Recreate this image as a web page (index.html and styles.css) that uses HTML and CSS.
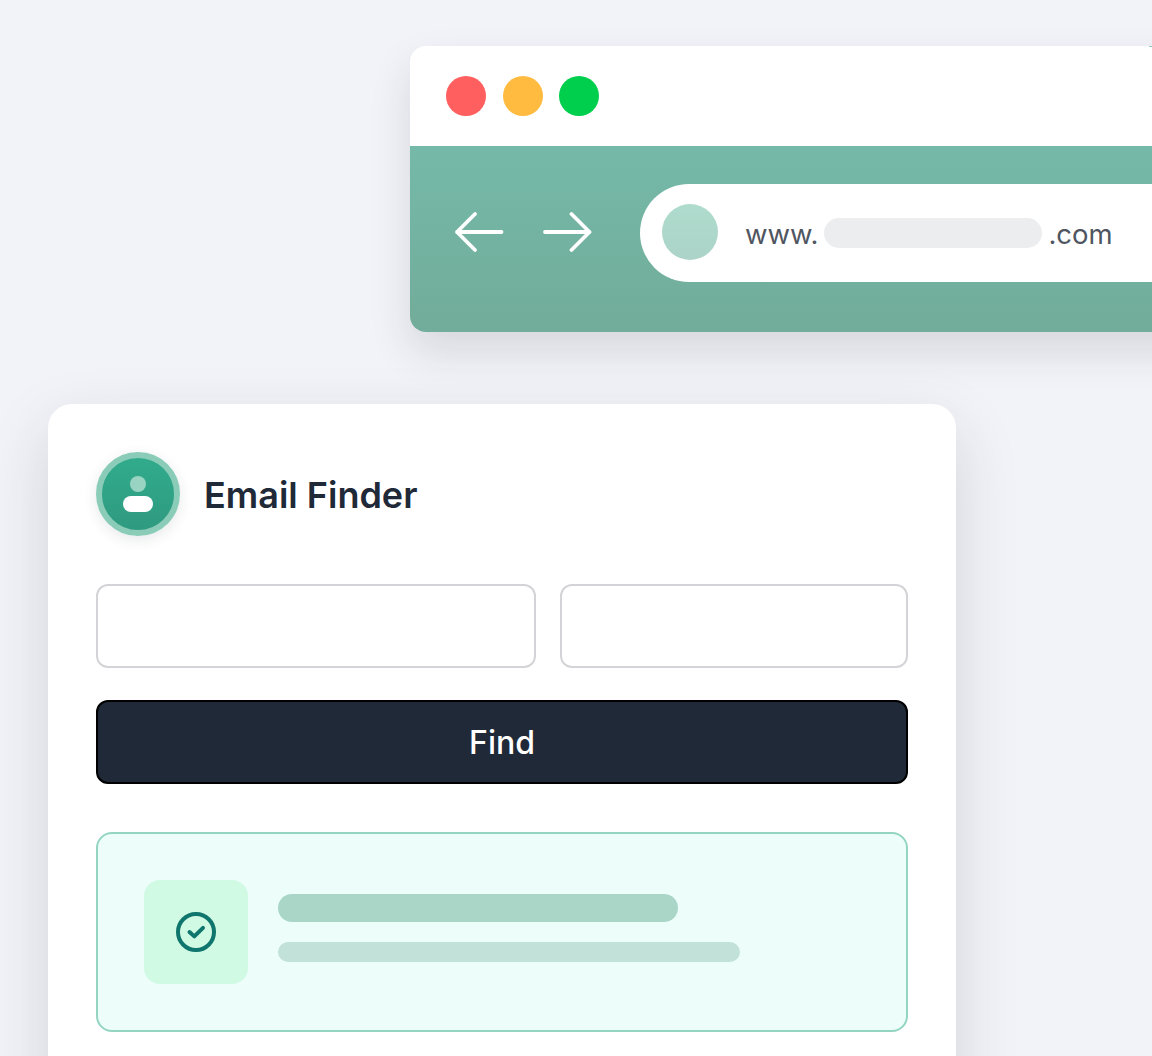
FILE: index.html
```html
<!DOCTYPE html>
<html lang="en">
<head>
<meta charset="utf-8">
<title>Email Finder</title>
<link rel="stylesheet" href="styles.css">
</head>
<body>
<main class="stage">
  <section class="browser">
    <div class="titlebar">
      <span class="dot dot-red"></span>
      <span class="dot dot-yellow"></span>
      <span class="dot dot-green"></span>
    </div>
    <div class="toolbar">
      <div class="nav">
        <svg class="arrow" width="50" height="42" viewBox="0 0 50 42" fill="none"><path d="M47.5 21H3M21 3 3 21l18 18"/></svg>
        <svg class="arrow" width="50" height="42" viewBox="0 0 50 42" fill="none"><path d="M3 21h44.5M29.5 3l18 18-18 18"/></svg>
      </div>
      <div class="address">
        <span class="favicon"></span>
        <span class="url">www.</span>
        <span class="blank"></span>
        <span class="url">.com</span>
      </div>
    </div>
  </section>
  <section class="card">
    <header class="card-head">
      <div class="avatar">
        <span class="avatar-head"></span>
        <span class="avatar-body"></span>
      </div>
      <h1 class="title">Email Finder</h1>
    </header>
    <div class="fields">
      <div class="field field-wide"></div>
      <div class="field field-narrow"></div>
    </div>
    <button class="find" type="button">Find</button>
    <div class="result">
      <div class="check-box">
        <svg width="40" height="40" viewBox="0 0 40 40" fill="none"><circle class="check-ring" cx="20" cy="20" r="18"/><path class="check-mark" d="M13.5 20l4.8 4.4 8.7-8.6"/></svg>
      </div>
      <div class="lines">
        <span class="line line-a"></span>
        <span class="line line-b"></span>
      </div>
    </div>
  </section>
</main>
</body>
</html>
```
FILE: styles.css
```css
* { box-sizing: border-box; }
html, body { margin: 0; height: 1056px; overflow: hidden; }
body { background: #f2f3f8; font-family: Inter, "Liberation Sans", sans-serif; }
.stage { display: flex; flex-direction: column; align-items: flex-start; padding: 46px 0 0 48px; }

.browser {
  position: relative;
  flex: none;
  width: 900px;
  margin-left: 362px;
  border-radius: 16px;
  overflow: hidden;
  box-shadow: 0 20px 40px rgba(31, 41, 55, 0.13);
}
.browser::after {
  content: "";
  position: absolute;
  top: 0;
  left: 739px;
  width: 3px;
  height: 1px;
  background: #8fc9bb;
}
.titlebar { display: flex; align-items: center; gap: 16.5px; height: 100px; padding-left: 36px; background: #fff; }
.dot { width: 40px; height: 40px; border-radius: 50%; }
.dot-red { background: #ff5f5f; }
.dot-yellow { background: #ffbb40; }
.dot-green { background: #00ce4d; }
.toolbar {
  display: flex;
  align-items: flex-start;
  height: 186px;
  padding: 38px 0 0 44px;
  background: linear-gradient(180deg, #75b9a8, #72ac9a);
}
.nav { display: flex; gap: 38px; width: 186px; margin-top: 27px; }
.arrow { flex: none; }
.arrow path { stroke: #fff; stroke-width: 3.8; stroke-linecap: round; stroke-linejoin: round; }
.address {
  display: flex;
  align-items: center;
  flex: 1;
  height: 98px;
  padding-left: 22px;
  border-radius: 49px 0 0 49px;
  background: #fff;
}
.favicon { width: 56px; height: 56px; margin: 0 27px 2px 0; border-radius: 50%; background: linear-gradient(180deg, #aedccd, #acd3c8); }
.url { margin-top: 2px; font-size: 27.5px; line-height: 34px; color: #4f5661; }
.blank { width: 218px; height: 30px; margin: 0 6px; border-radius: 15px; background: #ecedef; }

.card {
  flex: none;
  width: 908px;
  height: 760px;
  margin-top: 72px;
  padding: 48px;
  border-radius: 24px;
  background: #fff;
  box-shadow: 0 24px 64px rgba(31, 41, 55, 0.15);
}
.card-head { display: flex; align-items: center; gap: 24px; height: 84px; }
.avatar {
  display: flex;
  flex-direction: column;
  align-items: center;
  flex: none;
  width: 84px;
  height: 84px;
  padding-top: 18px;
  border: 6px solid #8accb8;
  border-radius: 50%;
  background: linear-gradient(180deg, #31ab8c, #2f9a80);
  box-shadow: 0 4px 14px rgba(31, 41, 55, 0.1);
}
.avatar-head { width: 16px; height: 16px; border-radius: 50%; background: #99d4c2; }
.avatar-body { width: 30px; height: 16px; margin-top: 4px; border-radius: 8px; background: #fff; }
.title { margin: 2px 0 0; font-size: 36px; font-weight: 600; line-height: 44px; color: #1f2937; }

.fields { display: flex; gap: 24px; margin-top: 48px; }
.field { height: 84px; border: 2px solid #d4d4d8; border-radius: 12px; background: #fff; }
.field-wide { width: 440px; }
.field-narrow { width: 348px; }
.find {
  display: block;
  width: 100%;
  height: 84px;
  margin-top: 32px;
  border: 2px solid #000;
  border-radius: 12px;
  background: #1f2937;
  color: #fff;
  font-family: inherit;
  font-size: 32px;
  font-weight: 500;
}
.result {
  display: flex;
  align-items: flex-start;
  gap: 30px;
  height: 200px;
  margin-top: 48px;
  padding: 46px;
  border: 2px solid #94d5c2;
  border-radius: 16px;
  background: #edfefa;
}
.check-box { display: flex; align-items: center; justify-content: center; flex: none; width: 104px; height: 104px; border-radius: 16px; background: #d1fae5; }
.check-ring { stroke: #0f766e; stroke-width: 4; }
.check-mark { stroke: #0f766e; stroke-width: 4; stroke-linecap: round; stroke-linejoin: round; }
.lines { display: flex; flex-direction: column; gap: 20px; padding-top: 14px; }
.line { display: block; }
.line-a { width: 400px; height: 28px; border-radius: 14px; background: #aad6c8; }
.line-b { width: 462px; height: 20px; border-radius: 10px; background: #c2e2d9; }
```
